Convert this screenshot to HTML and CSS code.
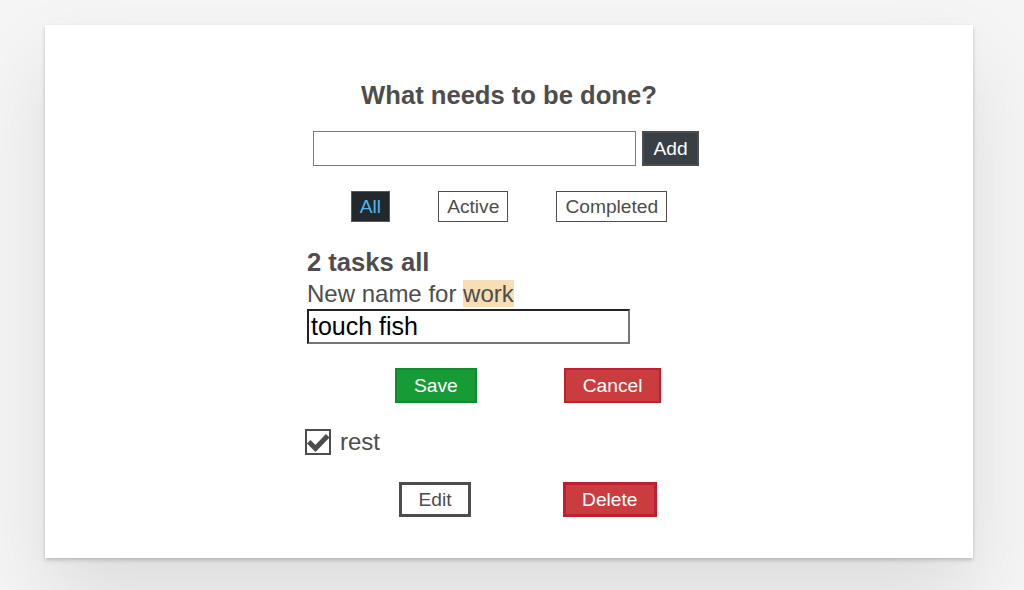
FILE: index.html
```html
<!DOCTYPE html>
<html lang="en">
<head>
<meta charset="utf-8">
<title>Todo</title>
<link rel="stylesheet" href="styles.css">
</head>
<body>
<div class="card">
  <div class="col">
    <h1 class="title">What needs to be done?</h1>
    <form class="add-row">
      <input class="new-input" type="text" value="">
      <button type="button" class="btn btn-add">Add</button>
    </form>
    <div class="filters">
      <button type="button" class="btn filter filter-on">All</button>
      <button type="button" class="btn filter">Active</button>
      <button type="button" class="btn filter">Completed</button>
    </div>
    <h2 class="count">2 tasks all</h2>
    <div class="label">New name for <span class="hl">work</span></div>
    <input class="edit-input" type="text" value="touch fish">
    <div class="group group-save">
      <button type="button" class="btn btn-save">Save</button>
      <button type="button" class="btn btn-danger btn-thin">Cancel</button>
    </div>
    <div class="todo">
      <span class="cb">
        <svg width="26" height="26" viewBox="0 0 26 26"><path d="M5.5 14.5 L10.5 19.5 L21 8.5" fill="none" stroke="#4d4d4d" stroke-width="5" stroke-linecap="square"/></svg>
      </span>
      <span class="todo-name">rest</span>
    </div>
    <div class="group group-edit">
      <button type="button" class="btn btn-edit">Edit</button>
      <button type="button" class="btn btn-danger btn-thick">Delete</button>
    </div>
  </div>
</div>
</body>
</html>
```
FILE: styles.css
```css
html, body {
  margin: 0;
  padding: 0;
}
body {
  background: #f5f5f5;
  font-family: "Liberation Sans", Arial, sans-serif;
  color: #4d4d4d;
  height: 590px;
  overflow: hidden;
}
.card {
  box-sizing: border-box;
  width: 928px;
  height: 533px;
  margin: 25px 0 0 45px;
  background: #fff;
  padding: 54px 0 0;
  box-shadow: 0 2px 4px 0 rgba(0,0,0,0.2), 0 40px 80px 0 rgba(0,0,0,0.1);
}
.col {
  width: 404px;
  margin: 0 auto;
  display: flex;
  flex-direction: column;
  align-items: flex-start;
}
.title {
  align-self: stretch;
  margin: 0;
  text-align: center;
  font-size: 25.6px;
  line-height: 32px;
  font-weight: 700;
}
.btn {
  box-sizing: border-box;
  font-family: "Liberation Sans", Arial, sans-serif;
  font-size: 19.2px;
  line-height: 1;
  height: 35px;
  margin: 0;
  border-radius: 0;
  display: inline-flex;
  align-items: center;
  justify-content: center;
  cursor: pointer;
}
.add-row {
  display: flex;
  gap: 6px;
  margin: 20px 0 0 6px;
}
.new-input {
  box-sizing: border-box;
  width: 323px;
  height: 35px;
  margin: 0;
  border: 1px solid #7a7a7a;
  padding: 0 4px;
  font-size: 19px;
  font-family: "Liberation Sans", Arial, sans-serif;
}
.btn-add {
  background: #383f45;
  border: 2px solid #4d4d4d;
  color: #fff;
  padding: 0 9.5px;
}
.filters {
  align-self: stretch;
  display: flex;
  justify-content: center;
  gap: 48px;
  margin-top: 25px;
}
.filter {
  height: 31px;
  background: #fff;
  border: 1px solid #4d4d4d;
  color: #4d4d4d;
  padding: 0 8px;
}
.filter-on {
  background: #23282d;
  border-color: #5a5a5a;
  color: #4fb6ea;
}
.count {
  margin: 23px 0 0;
  font-size: 25.6px;
  line-height: 35px;
  font-weight: 700;
}
.label {
  font-size: 24px;
  line-height: 28px;
}
.hl {
  background: #f7deb4;
}
.edit-input {
  box-sizing: border-box;
  width: 323px;
  height: 35px;
  margin: 1px 0 0;
  padding: 0 2px;
  border-style: solid;
  border-width: 2px;
  border-color: #222 #767676 #767676 #222;
  font-size: 25px;
  font-family: "Liberation Sans", Arial, sans-serif;
  color: #000;
}
.group {
  display: flex;
}
.group-save {
  margin-top: 24px;
  padding-left: 88px;
  gap: 87px;
}
.group-edit {
  margin-top: 27px;
  padding-left: 92px;
  gap: 92px;
}
.btn-save {
  background: #179b36;
  border: 2px solid #0f8c2d;
  color: #fff;
  padding: 0 17px;
}
.btn-danger {
  background: #ca3c3e;
  color: #fff;
}
.btn-thin {
  border: 2px solid #bf2031;
  padding: 0 17px;
}
.btn-thick {
  border: 3px solid #bf2031;
  padding: 0 16px;
}
.btn-edit {
  background: #fff;
  border: 3px solid #4d4d4d;
  color: #4d4d4d;
  padding: 0 16.5px;
}
.todo {
  display: flex;
  align-items: center;
  gap: 9px;
  margin: 26px 0 0 -2px;
  height: 26px;
}
.cb {
  box-sizing: border-box;
  width: 26px;
  height: 26px;
  border: 2px solid #4d4d4d;
  display: block;
  position: relative;
}
.cb svg {
  position: absolute;
  left: -2px;
  top: -2px;
}
.todo-name {
  font-size: 24px;
  line-height: 26px;
}
```
